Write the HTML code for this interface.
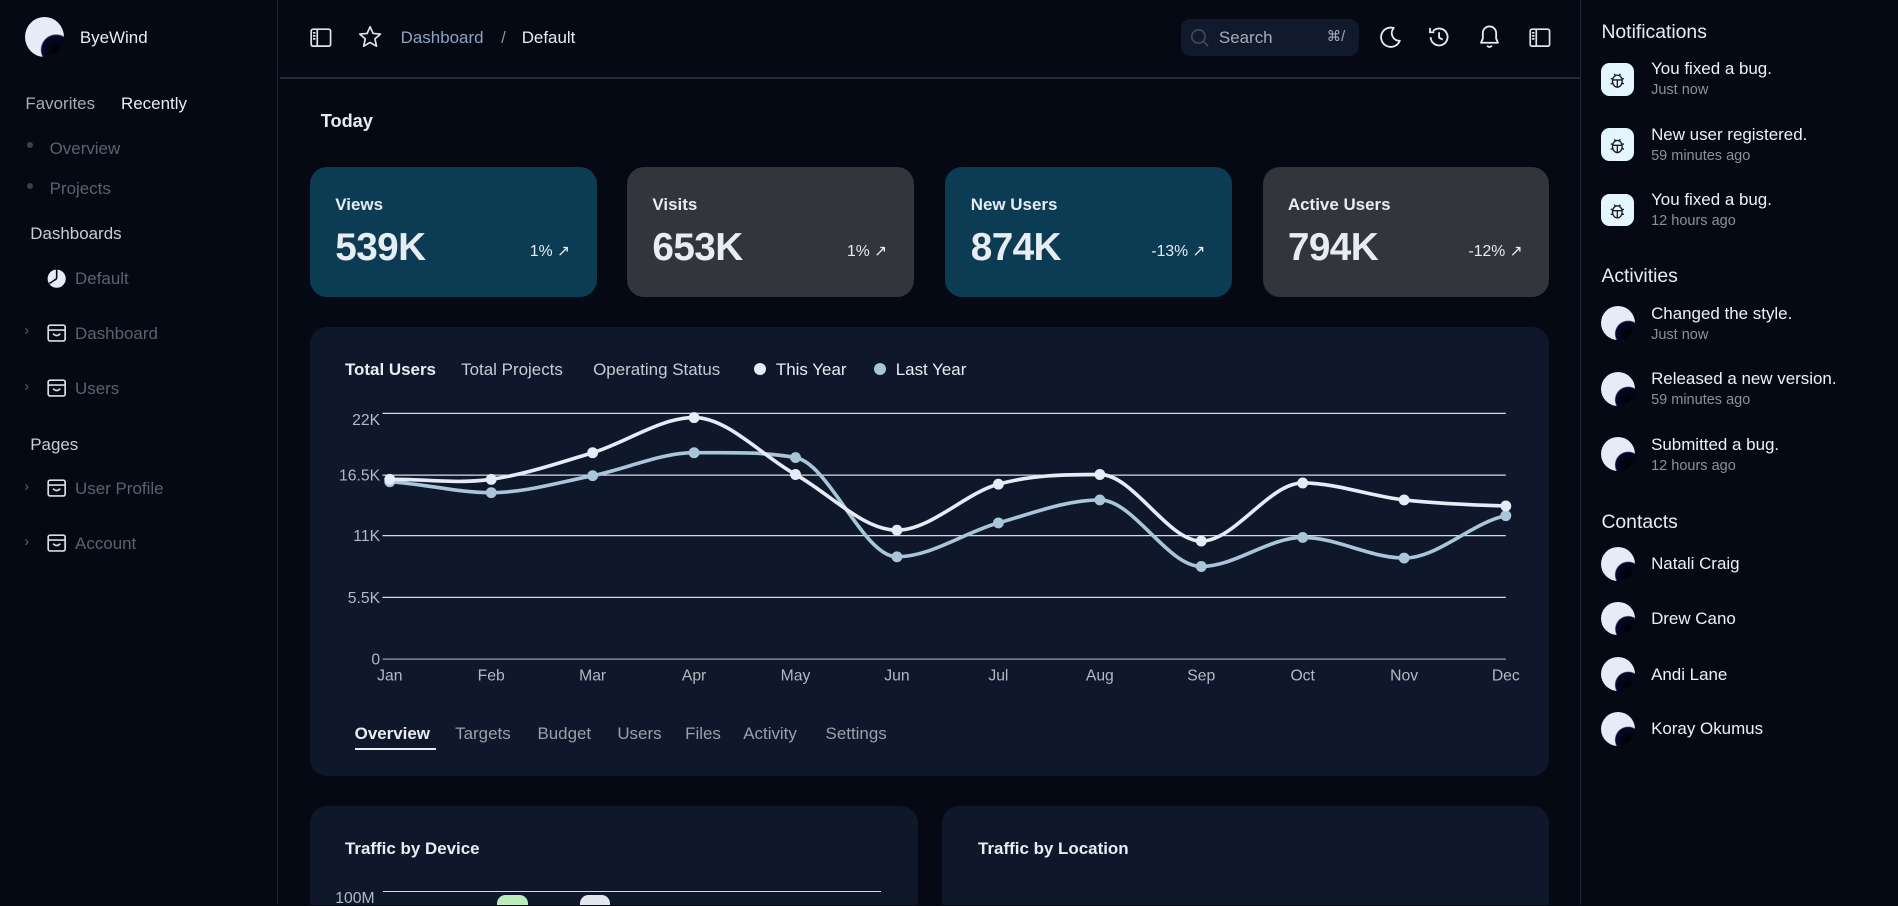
<!DOCTYPE html>
<html><head><meta charset="utf-8">
<style>
html{zoom:1.21046;overflow:hidden;height:748px}
*{margin:0;padding:0;box-sizing:border-box}
body{width:1568px;height:748px;overflow:hidden;background:#050913;font-family:"Liberation Sans",sans-serif;color:#e8ecf3;position:relative}
.a{position:absolute;white-space:nowrap}
.side{position:absolute;left:0;top:0;width:230px;height:748px;border-right:1px solid #1d2638}
.rp{position:absolute;left:1305px;top:0;width:263px;height:748px;border-left:1px solid #1d2638}
.hdr{position:absolute;left:231px;top:64px;width:1074px;height:1.5px;background:#1f2a3d}
.g{color:#5b616d}
.t14{font-size:14px}
.card{position:absolute;top:138px;width:237px;height:107px;border-radius:14px}
.card .l{position:absolute;left:21px;top:23px;font-size:14px;font-weight:bold}
.card .v{position:absolute;left:21px;top:49px;font-size:32px;font-weight:bold;letter-spacing:-0.5px}
.card .p{position:absolute;right:22px;top:61px;font-size:13px}
.panel{position:absolute;background:#0f172a;border-radius:14px}
.av{position:absolute;width:28px;height:28px;border-radius:50%;background:radial-gradient(circle at 80% 82%,#000 0,#05082a 32%,transparent 35%),#e5ebf7}
.bug{position:absolute;width:27px;height:27px;border-radius:7px;background:#e3f5ff}
.nt{position:absolute;font-size:14px;color:#eef1f6}
.ns{position:absolute;font-size:12px;color:#8b919b}
</style></head><body>
<div class="side">
 <div class="av" style="left:21px;top:14px;width:32px;height:33px"></div>
 <div class="a" style="left:66px;top:23px;font-size:14px">ByeWind</div>
 <div class="a t14" style="left:21px;top:78px;color:#a7adb6">Favorites</div>
 <div class="a t14" style="left:100px;top:78px">Recently</div>
 <div class="a" style="left:22px;top:117px;width:5px;height:5px;border-radius:50%;background:#3b4049"></div>
 <div class="a t14 g" style="left:41px;top:115px">Overview</div>
 <div class="a" style="left:22px;top:151px;width:5px;height:5px;border-radius:50%;background:#3b4049"></div>
 <div class="a t14 g" style="left:41px;top:148px">Projects</div>
 <div class="a t14" style="left:25px;top:185px;color:#c9ced6">Dashboards</div>
 <svg class="a" style="left:39px;top:222px" width="16" height="16" viewBox="0 0 16 16"><circle cx="8" cy="8" r="7.5" fill="#e5ebf7"/><path d="M8 8L8 .5M8 8L2 12" stroke="#050913" stroke-width="1.3"/></svg>
 <div class="a t14 g" style="left:62px;top:222px">Default</div>
 <div class="a g" style="left:20px;top:267px;font-size:12px">›</div>
 <svg class="a" style="left:39px;top:268px" width="16" height="15" viewBox="0 0 16 15"><rect x="1" y="1" width="14" height="13" rx="1.5" fill="none" stroke="#d8dde6" stroke-width="1.4"/><path d="M1 5H15M5 8Q8 11 11 8" fill="none" stroke="#d8dde6" stroke-width="1.3"/></svg>
 <div class="a t14 g" style="left:62px;top:268px">Dashboard</div>
 <div class="a g" style="left:20px;top:313px;font-size:12px">›</div>
 <svg class="a" style="left:39px;top:313px" width="16" height="15" viewBox="0 0 16 15"><rect x="1" y="1" width="14" height="13" rx="1.5" fill="none" stroke="#d8dde6" stroke-width="1.4"/><path d="M1 5H15M5 8Q8 11 11 8" fill="none" stroke="#d8dde6" stroke-width="1.3"/></svg>
 <div class="a t14 g" style="left:62px;top:313px">Users</div>
 <div class="a t14" style="left:25px;top:359px;color:#c9ced6">Pages</div>
 <div class="a g" style="left:20px;top:396px;font-size:12px">›</div>
 <svg class="a" style="left:39px;top:396px" width="16" height="15" viewBox="0 0 16 15"><rect x="1" y="1" width="14" height="13" rx="1.5" fill="none" stroke="#d8dde6" stroke-width="1.4"/><path d="M1 5H15M5 8Q8 11 11 8" fill="none" stroke="#d8dde6" stroke-width="1.3"/></svg>
 <div class="a t14 g" style="left:62px;top:396px">User Profile</div>
 <div class="a g" style="left:20px;top:441px;font-size:12px">›</div>
 <svg class="a" style="left:39px;top:441px" width="16" height="15" viewBox="0 0 16 15"><rect x="1" y="1" width="14" height="13" rx="1.5" fill="none" stroke="#d8dde6" stroke-width="1.4"/><path d="M1 5H15M5 8Q8 11 11 8" fill="none" stroke="#d8dde6" stroke-width="1.3"/></svg>
 <div class="a t14 g" style="left:62px;top:441px">Account</div>
</div>

<svg class="a" style="left:256px;top:23px" width="18" height="16" viewBox="0 0 18 16" fill="none" stroke="#dfe4ec" stroke-width="1.4"><rect x="1" y="1" width="16" height="14" rx="1.5"/><path d="M6 1V15M2.5 4H4.5M2.5 6.5H4.5M2.5 9H4.5"/></svg>
<svg class="a" style="left:296px;top:21px" width="20" height="19" viewBox="0 0 20 19"><path d="M10 1.5L12.5 7 18.5 7.5 14 11.5 15.3 17.5 10 14.4 4.7 17.5 6 11.5 1.5 7.5 7.5 7Z" fill="none" stroke="#dfe4ec" stroke-width="1.4" stroke-linejoin="round"/></svg>
<div class="a t14" style="left:331px;top:23px;color:#8ea3bf">Dashboard</div>
<div class="a t14" style="left:414px;top:23px;color:#8b919b">/</div>
<div class="a t14" style="left:431px;top:23px">Default</div>
<div class="a" style="left:976px;top:16px;width:147px;height:30px;border-radius:8px;background:#111a2c"></div>
<svg class="a" style="left:983px;top:23px" width="16" height="16" viewBox="0 0 16 16"><circle cx="7" cy="7" r="5.5" fill="none" stroke="#444c5a" stroke-width="1.3"/><path d="M11 11L15 15" stroke="#444c5a" stroke-width="1.3"/></svg>
<div class="a t14" style="left:1007px;top:23px;color:#a5aab3">Search</div>
<div class="a" style="left:1096px;top:24px;font-size:12px;color:#a5aab3">⌘/</div>
<svg class="a" style="left:1138px;top:21px" width="20" height="20" viewBox="0 0 20 20"><path d="M13 2.5A8 8 0 1 0 18 13 6.3 6.3 0 0 1 13 2.5Z" fill="none" stroke="#e8ecf3" stroke-width="1.5" stroke-linejoin="round"/></svg>
<svg class="a" style="left:1179px;top:21px" width="20" height="20" viewBox="0 0 20 20" fill="none" stroke="#e8ecf3" stroke-width="1.5"><path d="M3 10A7 7 0 1 0 5 5M2.5 2.5V6H6"/><path d="M10 6V10.5L13 12"/></svg>
<svg class="a" style="left:1221px;top:20px" width="19" height="21" viewBox="0 0 19 21" fill="none" stroke="#e8ecf3" stroke-width="1.5" stroke-linejoin="round"><path d="M9.5 2A5.5 5.5 0 0 0 4 7.5V12L2.5 15.5H16.5L15 12V7.5A5.5 5.5 0 0 0 9.5 2Z"/><path d="M7.5 18Q9.5 20 11.5 18"/></svg>
<svg class="a" style="left:1263px;top:23px" width="18" height="16" viewBox="0 0 18 16" fill="none" stroke="#dfe4ec" stroke-width="1.4"><rect x="1" y="1" width="16" height="14" rx="1.5"/><path d="M6 1V15M2.5 4H4.5M2.5 6.5H4.5M2.5 9H4.5"/></svg>
<div class="hdr"></div>

<div class="a" style="left:265px;top:92px;font-size:15px;font-weight:bold">Today</div>
<div class="card" style="left:256px;background:#0c3b54"><div class="l">Views</div><div class="v">539K</div><div class="p">1% ↗</div></div>
<div class="card" style="left:518px;background:#32363c"><div class="l">Visits</div><div class="v">653K</div><div class="p">1% ↗</div></div>
<div class="card" style="left:781px;background:#0c3b54"><div class="l">New Users</div><div class="v">874K</div><div class="p">-13% ↗</div></div>
<div class="card" style="left:1043px;background:#32363c"><div class="l">Active Users</div><div class="v">794K</div><div class="p">-12% ↗</div></div>

<div class="panel" style="left:256px;top:270px;width:1024px;height:371px"></div>
<div class="a t14" style="left:285px;top:297px;font-weight:bold">Total Users</div>
<div class="a t14" style="left:381px;top:297px;color:#c6cbd3">Total Projects</div>
<div class="a t14" style="left:490px;top:297px;color:#c6cbd3">Operating Status</div>
<div class="a" style="left:623px;top:300px;width:10px;height:10px;border-radius:50%;background:#e5ebf7"></div>
<div class="a t14" style="left:641px;top:297px">This Year</div>
<div class="a" style="left:722px;top:300px;width:10px;height:10px;border-radius:50%;background:#a8c5da"></div>
<div class="a t14" style="left:740px;top:297px">Last Year</div>

<svg class="a" style="left:0;top:0" width="1568" height="748" viewBox="0 0 1568 748">
 <g stroke="#d7dce4" stroke-width="1"><path d="M316 341.5H1244M316 392.5H1244M316 442.5H1244M316 493.5H1244"/><path d="M316 544.5H1244" stroke="#9aa1ab"/></g>
 <g font-family="Liberation Sans" font-size="13" fill="#b3b9c2" text-anchor="end"><text x="314" y="351">22K</text><text x="314" y="397">16.5K</text><text x="314" y="447">11K</text><text x="314" y="498">5.5K</text><text x="314" y="549">0</text></g>
 <g font-family="Liberation Sans" font-size="13" fill="#b3b9c2" text-anchor="middle"><text x="322" y="562">Jan</text><text x="405.8" y="562">Feb</text><text x="489.6" y="562">Mar</text><text x="573.4" y="562">Apr</text><text x="657.2" y="562">May</text><text x="741" y="562">Jun</text><text x="824.8" y="562">Jul</text><text x="908.6" y="562">Aug</text><text x="992.4" y="562">Sep</text><text x="1076.2" y="562">Oct</text><text x="1160" y="562">Nov</text><text x="1244" y="562">Dec</text></g>
 <path fill="none" stroke="#a8c5da" stroke-width="3" d="M322 398C349.9 399.5 377.9 407 405.8 407C433.7 407 461.7 398.5 489.6 393C517.5 387.5 545.5 374 573.4 374C601.3 374 629.3 373 657.2 378C685.1 383 713.1 460 741 460C768.9 460 796.9 439.83 824.8 432C852.7 424.17 880.7 413 908.6 413C936.5 413 964.5 468 992.4 468C1020.3 468 1048.3 444 1076.2 444C1104.1 444 1132.1 461 1160 461C1187.9 461 1215.9 431.83 1244 426"/>
 <path fill="none" stroke="#e5ebf7" stroke-width="3" d="M322 396C349.9 395.67 377.9 400 405.8 396C433.7 392 461.7 382.5 489.6 374C517.5 365.5 545.5 345 573.4 345C601.3 345 629.3 376.5 657.2 392C685.1 407.5 713.1 438 741 438C768.9 438 796.9 407.67 824.8 400C852.7 392.33 880.7 392 908.6 392C936.5 392 964.5 447 992.4 447C1020.3 447 1048.3 399 1076.2 399C1104.1 399 1132.1 409.83 1160 413C1187.9 416.17 1215.9 417.17 1244 418"/>
 <g fill="#a8c5da"><circle cx="322" cy="398" r="4.5"/><circle cx="405.8" cy="407" r="4.5"/><circle cx="489.6" cy="393" r="4.5"/><circle cx="573.4" cy="374" r="4.5"/><circle cx="657.2" cy="378" r="4.5"/><circle cx="741" cy="460" r="4.5"/><circle cx="824.8" cy="432" r="4.5"/><circle cx="908.6" cy="413" r="4.5"/><circle cx="992.4" cy="468" r="4.5"/><circle cx="1076.2" cy="444" r="4.5"/><circle cx="1160" cy="461" r="4.5"/><circle cx="1244" cy="426" r="4.5"/></g>
 <g fill="#e5ebf7"><circle cx="322" cy="396" r="4.5"/><circle cx="405.8" cy="396" r="4.5"/><circle cx="489.6" cy="374" r="4.5"/><circle cx="573.4" cy="345" r="4.5"/><circle cx="657.2" cy="392" r="4.5"/><circle cx="741" cy="438" r="4.5"/><circle cx="824.8" cy="400" r="4.5"/><circle cx="908.6" cy="392" r="4.5"/><circle cx="992.4" cy="447" r="4.5"/><circle cx="1076.2" cy="399" r="4.5"/><circle cx="1160" cy="413" r="4.5"/><circle cx="1244" cy="418" r="4.5"/></g>
</svg>

<div class="a t14" style="left:293px;top:598px;font-weight:bold">Overview</div>
<div class="a" style="left:293px;top:618px;width:67px;height:2px;background:#e8ecf3"></div>
<div class="a t14" style="left:376px;top:598px;color:#9aa0a9">Targets</div>
<div class="a t14" style="left:444px;top:598px;color:#9aa0a9">Budget</div>
<div class="a t14" style="left:510px;top:598px;color:#9aa0a9">Users</div>
<div class="a t14" style="left:566px;top:598px;color:#9aa0a9">Files</div>
<div class="a t14" style="left:614px;top:598px;color:#9aa0a9">Activity</div>
<div class="a t14" style="left:682px;top:598px;color:#9aa0a9">Settings</div>

<div class="panel" style="left:256px;top:666px;width:502px;height:82px;border-radius:14px 14px 0 0"></div>
<div class="panel" style="left:778px;top:666px;width:502px;height:82px;border-radius:14px 14px 0 0"></div>
<div class="a t14" style="left:285px;top:693px;font-weight:bold">Traffic by Device</div>
<div class="a t14" style="left:808px;top:693px;font-weight:bold">Traffic by Location</div>
<div class="a" style="left:277px;top:735px;font-size:13px;color:#b3b9c2">100M</div>
<div class="a" style="left:316px;top:736px;width:412px;height:1px;background:#d7dce4"></div>
<div class="a" style="left:411px;top:739px;width:25px;height:9px;border-radius:7px 7px 0 0;background:#baedbd"></div>
<div class="a" style="left:479px;top:739px;width:25px;height:9px;border-radius:7px 7px 0 0;background:#e3e8f0"></div>

<div class="rp"></div>
<div class="a" style="left:1323px;top:17px;font-size:16px">Notifications</div>
<div class="bug" style="left:1323px;top:52px"></div><div class="bug" style="left:1323px;top:106px"></div><div class="bug" style="left:1323px;top:160px"></div>
<svg class="a" style="left:1323px;top:52px" width="27" height="135" viewBox="0 0 27 135" fill="none" stroke="#1c1c1c" stroke-width="1.1"><g id="b"><ellipse cx="13.5" cy="15" rx="4" ry="5"/><path d="M9.5 14H17.5M13.5 14V20M11 9L12 10.5M16 9L15 10.5M8 13H9.5M8 17H9.5M17.5 13H19M17.5 17H19"/></g><use href="#b" y="54"/><use href="#b" y="108"/></svg>
<div class="nt" style="left:1364px;top:49px">You fixed a bug.</div><div class="ns" style="left:1364px;top:68px">Just now</div>
<div class="nt" style="left:1364px;top:103px">New user registered.</div><div class="ns" style="left:1364px;top:122px">59 minutes ago</div>
<div class="nt" style="left:1364px;top:157px">You fixed a bug.</div><div class="ns" style="left:1364px;top:176px">12 hours ago</div>
<div class="a" style="left:1323px;top:219px;font-size:16px">Activities</div>
<div class="av" style="left:1323px;top:253px"></div><div class="av" style="left:1323px;top:307px"></div><div class="av" style="left:1323px;top:361px"></div>
<div class="nt" style="left:1364px;top:251px">Changed the style.</div><div class="ns" style="left:1364px;top:270px">Just now</div>
<div class="nt" style="left:1364px;top:305px">Released a new version.</div><div class="ns" style="left:1364px;top:324px">59 minutes ago</div>
<div class="nt" style="left:1364px;top:359px">Submitted a bug.</div><div class="ns" style="left:1364px;top:378px">12 hours ago</div>
<div class="a" style="left:1323px;top:422px;font-size:16px">Contacts</div>
<div class="av" style="left:1323px;top:452px"></div><div class="av" style="left:1323px;top:497px"></div><div class="av" style="left:1323px;top:543px"></div><div class="av" style="left:1323px;top:588px"></div>
<div class="nt" style="left:1364px;top:458px">Natali Craig</div>
<div class="nt" style="left:1364px;top:503px">Drew Cano</div>
<div class="nt" style="left:1364px;top:549px">Andi Lane</div>
<div class="nt" style="left:1364px;top:594px">Koray Okumus</div>
</body></html>
